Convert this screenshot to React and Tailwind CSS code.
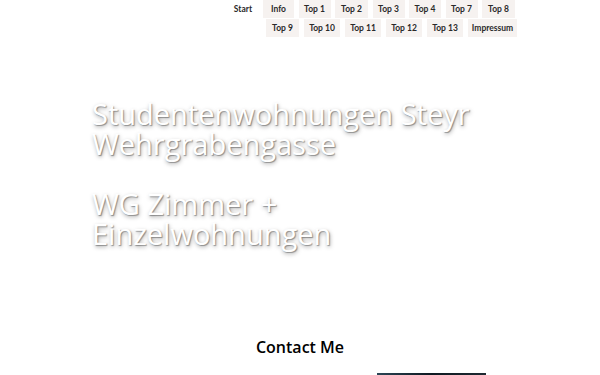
export default function App() {
  const row1 = [
    { t: "Start", w: "w-[31px]", bg: false },
    { t: "Info", w: "w-[31px]", bg: true },
    { t: "Top 1", w: "w-[32px]", bg: true },
    { t: "Top 2", w: "w-[33px]", bg: true },
    { t: "Top 3", w: "w-[32px]", bg: true },
    { t: "Top 4", w: "w-[32px]", bg: true },
    { t: "Top 7", w: "w-[32px]", bg: true },
    { t: "Top 8", w: "w-[33px]", bg: true },
  ];
  const row2 = [
    { t: "Top 9", w: "w-[33px]" },
    { t: "Top 10", w: "w-[36px]" },
    { t: "Top 11", w: "w-[36px]" },
    { t: "Top 12", w: "w-[36px]" },
    { t: "Top 13", w: "w-[36px]" },
    { t: "Impressum", w: "w-[49px]" },
  ];
  const heading =
    "text-white font-medium text-[29px] leading-[30px] [text-shadow:1px_1px_1px_rgba(0,0,0,0.35),1px_2px_4px_rgba(0,0,0,0.35)]";
  return (
    <div className="w-[600px] h-[375px] overflow-hidden bg-white font-['Open_Sans',sans-serif]">
      <nav className="flex flex-col items-end pr-[83px] gap-[1px] font-['Lato',sans-serif] font-bold text-[8.5px] text-[#2a2a2a]">
        <ul className="flex gap-[4.5px] pr-[2px]">
          {row1.map((it) => (
            <li
              key={it.t}
              className={`${it.w} h-[18px] flex items-center justify-center ${it.bg ? "bg-[#f6f2f0]" : ""}`}
            >
              {it.t}
            </li>
          ))}
        </ul>
        <ul className="flex gap-[5px]">
          {row2.map((it) => (
            <li
              key={it.t}
              className={`${it.w} h-[18px] flex items-center justify-center bg-[#f6f2f0]`}
            >
              {it.t}
            </li>
          ))}
        </ul>
      </nav>
      <div className="pl-[92px] mt-[62px]">
        <h1 className={heading}>
          Studentenwohnungen Steyr
          <br />
          Wehrgrabengasse
          <br />
          <br />
          WG Zimmer +
          <br />
          Einzelwohnungen
        </h1>
      </div>
      <div className="mt-[86px] flex justify-center">
        <h2 className="text-[16px] font-semibold text-black">Contact Me</h2>
      </div>
      <div className="mt-[14px] flex pl-[377px]">
        <div className="w-[109px] h-[10px] bg-gradient-to-r from-[#2c4656] via-[#0f1a22] to-[#1e2a32]"></div>
      </div>
    </div>
  );
}
